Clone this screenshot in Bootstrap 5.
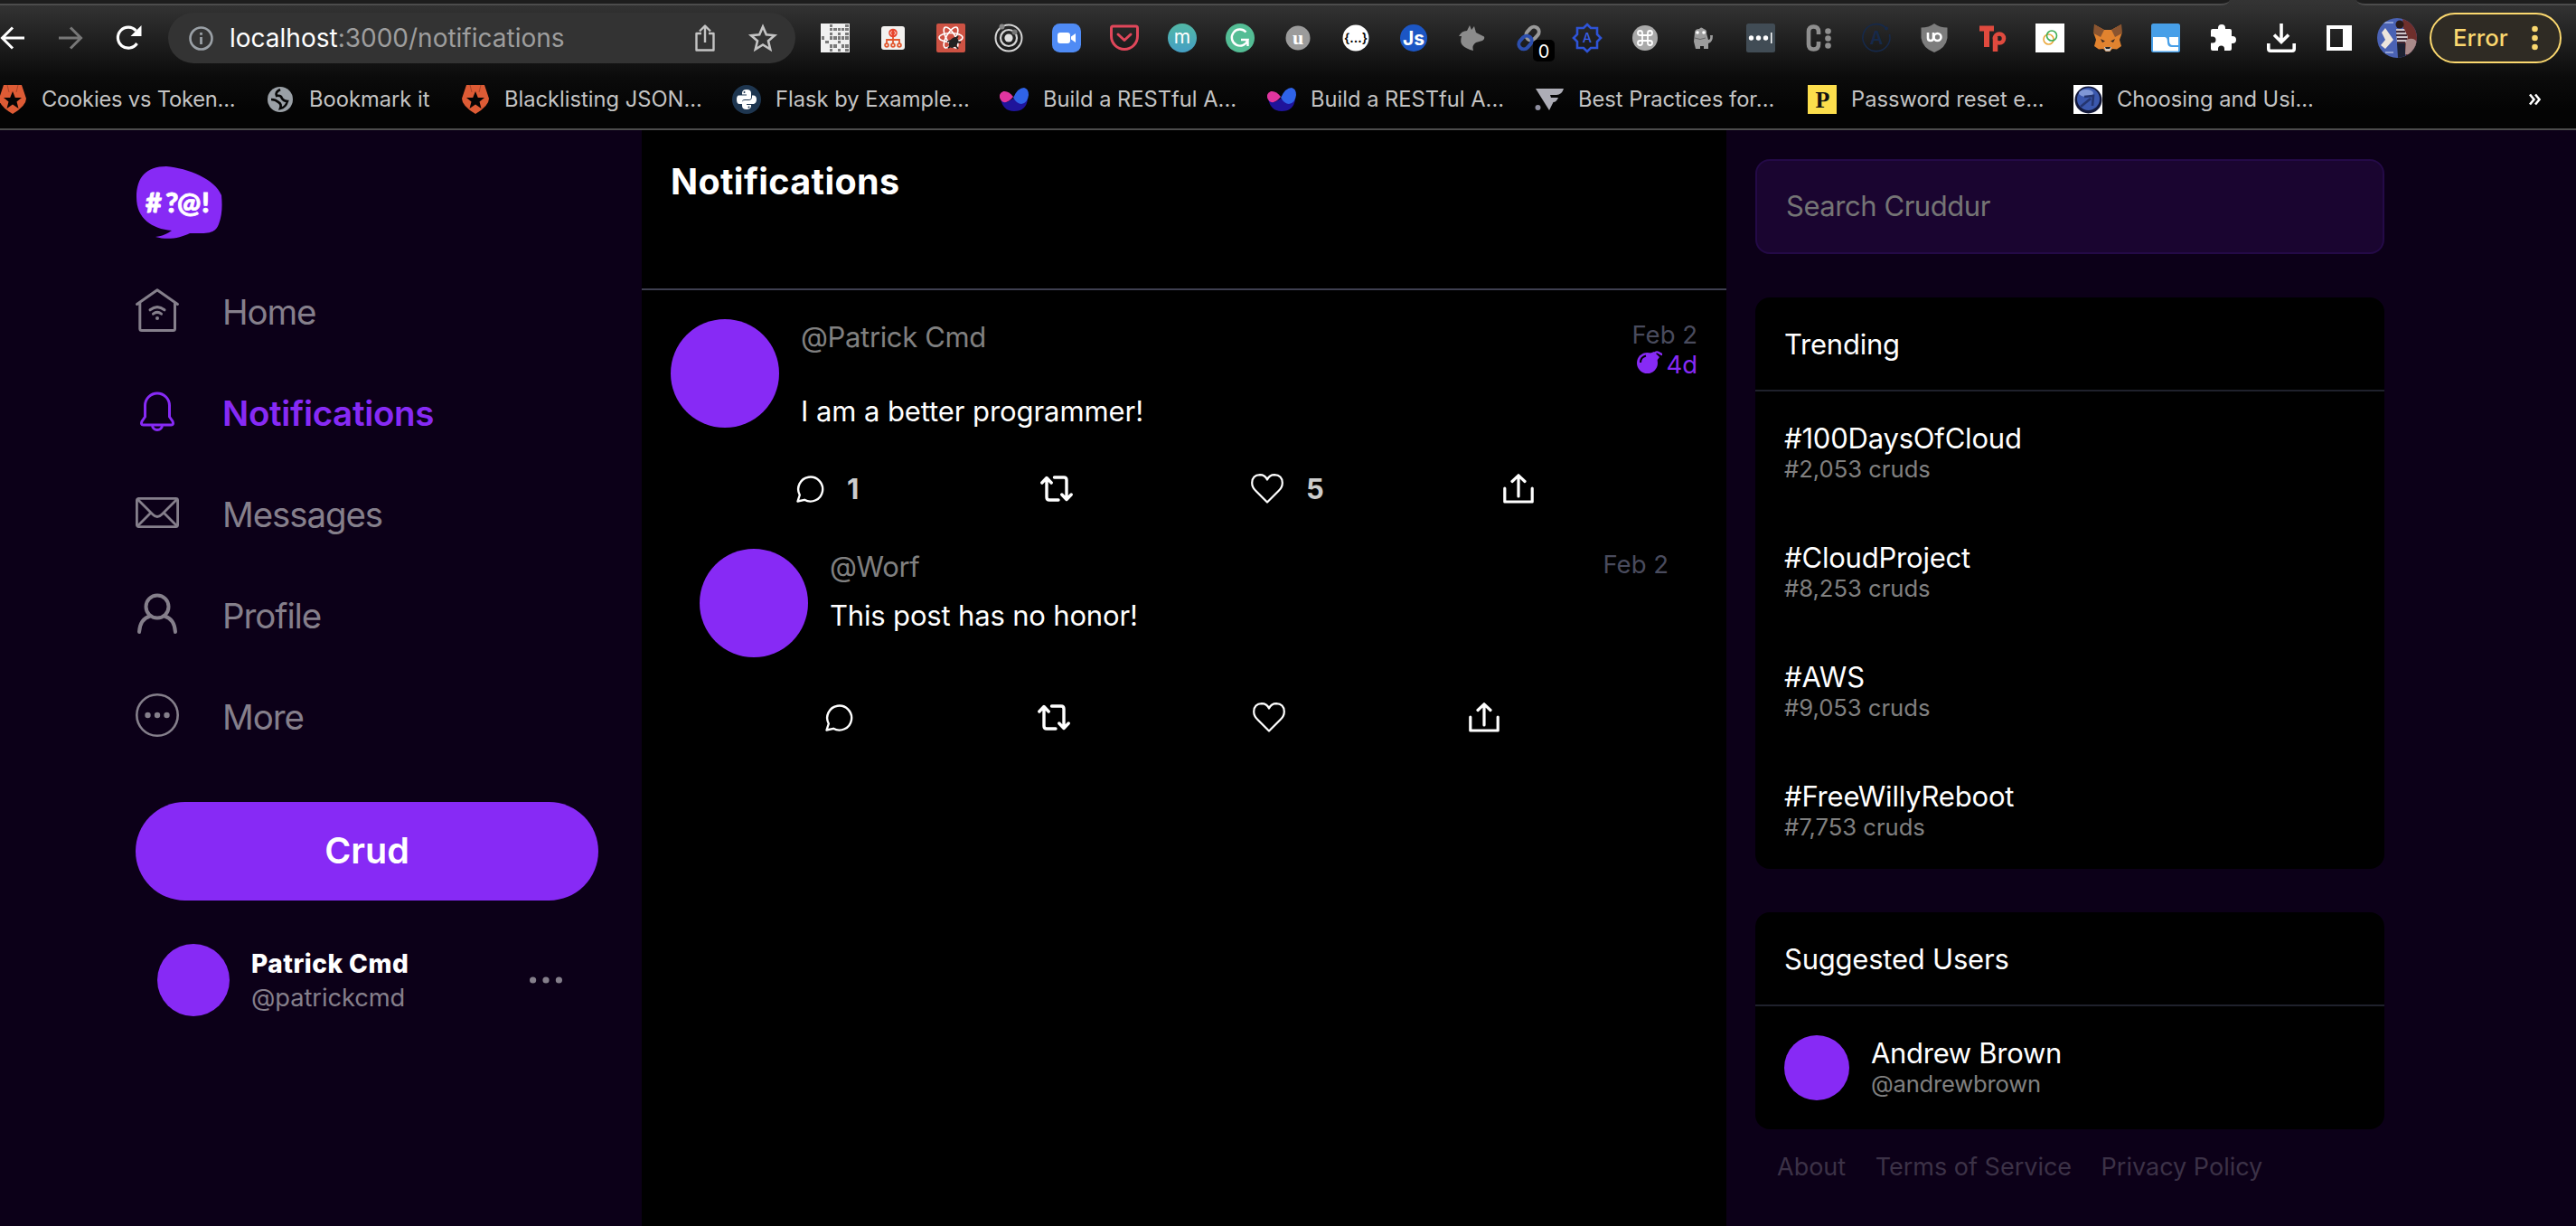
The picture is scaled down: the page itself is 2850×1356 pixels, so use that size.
<!DOCTYPE html>
<html lang="en">
<head>
<meta charset="utf-8">
<title>Notifications</title>
<link href="https://cdn.jsdelivr.net/npm/bootstrap@5.3.0/dist/css/bootstrap.min.css" rel="stylesheet">
<style>
:root{--violet:#872af5;--ink:#0c0018;--dim:#857f8b}
html,body{height:100%}
body{background:#000;color:#fff;font-family:Inter,"Liberation Sans",sans-serif;width:2850px;height:1356px;overflow:hidden}
a{text-decoration:none;color:inherit}
svg{display:block;flex:none;overflow:visible}

/* browser frame */
.chrome{height:144px;border-bottom:2px solid #4c4c4c;background:linear-gradient(#343434 0,#303030 12px,#0b0b0b 86px,#040404 120px)}
.tabstrip{height:6px}
.tabstrip div{background:#1d1d1d;border-bottom:2px solid #4c4c4c;height:6px}
.tab-l{width:2467px;border-bottom-right-radius:10px 6px}
.tab-r{width:243px;border-bottom-left-radius:10px 6px}
.toolbar{height:72px}
.history{width:186px}
.history svg:nth-child(2){margin-left:38px}
.history svg:nth-child(3){margin-left:37px}
.omni{width:694px;height:56px;border-radius:28px;background:#333;padding:0 21px 0 23px}
.url{font-size:28px;color:#9e9e9e;margin-left:18px;line-height:56px}
.url b{font-weight:400;color:#fff}
.star{margin-left:38px}
.face{margin-left:10px}
.exts{margin-left:12px}
.ext{width:64px;height:56px;display:flex;align-items:center;justify-content:center;position:relative}
.ext-count{position:absolute;left:36px;top:30px;width:24px;height:24px;border-radius:5px;background:#000;font-size:20px;line-height:26px;text-align:center}
.errpill{width:146px;height:56px;border:2px solid #fbd86f;border-radius:28px;background:#2f2b24;color:#fbd86f;font-size:25.7px;font-weight:500;padding:0 24px 0 24px;margin-left:14px}
.marks{display:grid;grid-template-columns:296px 216px 300px 296px 296px 296px 302px 294px 500px auto;margin-left:-2px;height:64px;align-items:center;font-size:23.7px;color:#c4c4c4}
.marks a{display:flex;align-items:center;gap:16px;white-space:nowrap;line-height:32px}
.marks a:first-child{letter-spacing:-.2px}

/* application */
.app{height:1212px}
.side{width:710px;background:var(--ink);padding:40px 48px 0 150px}
.side-link{height:112px;gap:48px;color:var(--dim);font-size:38.5px;letter-spacing:-1.1px}
.side-link span{padding-top:5px}
.side-link.current{color:var(--violet);font-weight:600;letter-spacing:-.33px}
.side-nav{margin-top:23px}
.crud-btn{height:109px;width:512px;margin-top:40px;border-radius:55px;background:var(--violet);color:#fff;font-size:39.5px;font-weight:600;border:0}
.crud-btn:hover{background:var(--violet);color:#fff}
.me{margin:48px 40px 0 24px}
.disc{background:var(--violet);border-radius:50%;flex:none}
.d80{width:80px;height:80px}.d120{width:120px;height:120px}.d72{width:72px;height:72px}
.me-name{font-size:28px;font-weight:800;letter-spacing:.5px;line-height:37px;padding-top:1px}
.me-handle{font-size:27.3px;color:var(--dim);line-height:37px;letter-spacing:-.08px}
.feed{width:1200px;background:#000}
.feed-head{height:177px;padding:33px 32px 0;border-bottom:2px solid #3e3f50}
.feed-head h1{font-size:39.5px;font-weight:750;letter-spacing:.35px;line-height:49px;margin:0}
.post,.reply{gap:24px}
.post{padding:32px 32px 0}
.reply{padding:46px 64px 0}
.who-row{height:40px}
.who{font-size:31px;color:#808080;line-height:40px;letter-spacing:-.35px}
.msg{font-size:31px;line-height:40px;letter-spacing:-.08px}
.post .msg{margin-top:42px}
.reply .msg{margin-top:14px;letter-spacing:-.17px}
.when{font-size:27.5px;line-height:33px;color:#494b5d;padding-top:1px}
.fuse{color:var(--violet);gap:3px}
.acts{display:grid;align-items:center;height:44px;margin-left:-5px}
.post .acts{grid-template-columns:270px 233px 279px auto;margin-top:42px}
.reply .acts{grid-template-columns:235px 238px 239px auto;margin-top:70px}
.acts b{font-size:31px;font-weight:700;color:#ccc;line-height:44px;padding-top:2px}
.with-count{gap:25px}
.rail{width:940px;background:var(--ink);padding:32px 212px 0 32px}
.search{height:105px;border:2px solid #240a47;border-radius:16px;background:#1a0530;padding:0 32px 2px;font-size:31px;letter-spacing:-.45px;color:#fff;margin-bottom:48px}
.search:focus{background:#1a0530;color:#fff}
.search::placeholder{color:#757575;opacity:1}
.panel{background:#000;border-radius:16px;border:0;margin-bottom:48px;color:#fff}
.panel-head{height:104px;border-bottom:2px solid #1f212c;padding:0 32px;font-size:31px;letter-spacing:-.22px;line-height:103px}
.topic{height:132px;padding:32px 32px 0}
.suggest{gap:24px;padding:32px}
.t1{font-size:31px;letter-spacing:-.2px;line-height:40px}
.suggest .t1{letter-spacing:-.3px}
.t2{font-size:25.6px;line-height:32px;color:#808080;margin-top:-2px}
.suggest .t2{letter-spacing:-.2px}
.legal{padding-left:24px;gap:32.5px;font-size:27px;color:#3c3247;line-height:34px;margin-top:-23px}
</style>
</head>
<body>
<svg class="d-none">
  <symbol id="i-reply" viewBox="0 0 31 31"><path d="M1.500 29.500L3.800 22.500A13.500 13.500 0 1 1 9 27.800Z" fill="none" stroke="#fff" stroke-width="2.400" stroke-linejoin="round"/></symbol>
  <symbol id="i-repost" viewBox="0 0 36 29"><path d="M1.800 8L7 2.500L12.200 8M7 3V24Q7 27 10 27H20M15.500 2H26Q29 2 29 5V26M23.800 21L29 26.500L34.200 21" fill="none" stroke="#fff" stroke-width="3.400" stroke-linecap="round" stroke-linejoin="round"/></symbol>
  <symbol id="i-heart" viewBox="0 0 36 33"><path d="M18 31.500L5 18.500Q1.200 15 1.200 10Q1.500 1.500 10 1.200Q15.500 1.200 18 6.500Q20.500 1.200 26 1.200Q34.500 1.500 34.800 10Q34.800 15 31 18.500Z" fill="none" stroke="#fff" stroke-width="2.200" stroke-linejoin="round"/></symbol>
  <symbol id="i-share" viewBox="0 0 34 33"><path d="M1.800 16V31H32.200V16M17 25V2M10 8.500L17 1.800L24 8.500" fill="none" stroke="#fff" stroke-width="3.200" stroke-linecap="round" stroke-linejoin="round"/></symbol>
  <symbol id="i-auth" viewBox="0 0 32 32"><path d="M6 0H26L31 15Q31 23 16 32Q1 23 1 15Z" fill="#dd5b35"/><path d="M16 7L18.800 14H26L20.500 18.500L22.500 26L16 21.500L9.500 26L11.500 18.500L6 14H13.200Z" fill="#050505"/><path d="M10 0L12 8M22 0L20 8" stroke="#a8452a" stroke-width="1"/></symbol>
  <symbol id="i-rest" viewBox="0 0 32 32"><path d="M1 14Q3 29 16 29T31 16L24 20L15 15L8 19Z" fill="#1f149b"/><path d="M15 13Q10 6 4 7Q-1 9 0 14Q2 20 7 19Q11 18 15 13Z" fill="#e0359f"/><path d="M15 14Q20 3 27 3Q32 4 32 11Q31 20 24 21Q19 21 15 14Z" fill="#2f63e8"/></symbol>
</svg>
<header class="chrome">
  <div class="tabstrip d-flex justify-content-between"><div class="tab-l"></div><div class="tab-r"></div></div>
  <div class="toolbar d-flex align-items-center">
    <div class="history d-flex align-items-center">
      <svg width="27" height="26" viewBox="0 0 27 26" fill="none" stroke="#fff" stroke-width="3"><path d="M27 13H3M14 1.500L2.500 13L14 24.500"/></svg>
      <svg width="27" height="26" viewBox="0 0 27 26" fill="none" stroke="#777" stroke-width="3"><path d="M0 13H24M13 1.500L24.500 13L13 24.500"/></svg>
      <svg width="28" height="28" viewBox="0 0 28 28"><path d="M22.500 20A11.500 11.500 0 1 1 21.500 6" fill="none" stroke="#fff" stroke-width="3.200"/><path d="M27.500 0V12H15.500Z" fill="#fff"/></svg>
    </div>
    <div class="omni d-flex align-items-center">
      <svg width="27" height="27" viewBox="0 0 27 27"><circle cx="13.500" cy="13.500" r="12" fill="none" stroke="#9aa0a6" stroke-width="2.600"/><path d="M13.500 12V20M13.500 7V9.800" stroke="#9aa0a6" stroke-width="2.800"/></svg>
      <span class="url"><b>localhost</b>:3000/notifications</span>
      <svg class="ms-auto" width="22" height="30" viewBox="0 0 22 30" fill="none" stroke="#c4c4c4" stroke-width="2.400"><path d="M7 10H1.500V28.500H20.500V10H15M11 20V2M5 7.500L11 1.500L17 7.500" stroke-linejoin="round"/></svg>
      <svg class="star" width="30" height="30" viewBox="0 0 30 30" fill="none" stroke="#c4c4c4" stroke-width="2.600"><path d="M15 2.500L18.800 11.300L28 12.200L21 18.300L23.200 27.500L15 22.500L6.800 27.500L9 18.300L2 12.200L11.200 11.300Z"/></svg>
    </div>
    <div class="exts d-flex">
      <div class="ext"><svg width="32" height="32" viewBox="0 0 32 32"><path d="M0 0H32V32H0Z" fill="#f0f0f0"/><path d="M10 1h3v3h-3zM27 1h4v3h-4zM1 14h3v4h-3zM5 19h4v3h-4zM10 5h3v3h-3zM14 5h4v3h-4zM19 5h3v3h-3zM23 5h3v3h-3zM27 5h4v3h-4zM10 10h3v3h-3zM19 10h3v3h-3zM27 10h4v3h-4zM10 14h3v4h-3zM14 14h4v4h-4zM19 14h3v4h-3zM23 14h3v4h-3zM27 14h4v4h-4zM19 19h3v3h-3zM10 23h3v4h-3zM14 23h4v4h-4zM23 23h3v4h-3zM27 23h4v4h-4zM10 28h3v3h-3zM19 28h3v3h-3zM27 28h4v3h-4z" fill="#7a7a7a"/></svg></div>
      <div class="ext"><svg width="26" height="26" viewBox="0 0 26 26"><rect width="26" height="26" rx="3" fill="#f3f1ef"/><g fill="none" stroke="#e2582f" stroke-width="1.800"><path d="M13 11V19M6 19V15H20V19"/><circle cx="6" cy="21" r="1.900"/><circle cx="13" cy="21" r="1.900"/><circle cx="20" cy="21" r="1.900"/></g><circle cx="13" cy="7.500" r="4.800" fill="#e8452c"/><path d="M11.500 5.500L10 7.500L11.500 9.500M14.500 5.500L16 7.500L14.500 9.500" stroke="#fff" fill="none"/></svg></div>
      <div class="ext"><svg width="32" height="32" viewBox="0 0 32 32"><rect width="32" height="32" rx="2" fill="#cd5243"/><g fill="none" stroke="#fff" stroke-width="1.600"><ellipse cx="16" cy="15.500" rx="13" ry="5"/><ellipse cx="16" cy="15.500" rx="13" ry="5" transform="rotate(60 16 15.500)"/><ellipse cx="16" cy="15.500" rx="13" ry="5" transform="rotate(120 16 15.500)"/></g><ellipse cx="19" cy="21" rx="4.500" ry="6.500" transform="rotate(35 19 21)" fill="#222"/><path d="M12 20L16 19M13 27L17 24M24 28L21 24M27 21L22 20M24 14L21 17" stroke="#222" stroke-width="1.800"/></svg></div>
      <div class="ext"><svg width="32" height="32" viewBox="0 0 32 32" fill="none" stroke="#d6d6d6"><circle cx="16" cy="16" r="14.500" stroke-width="2"/><circle cx="16" cy="16" r="9" stroke-width="2.200"/><circle cx="16" cy="16" r="4.600" fill="#e0e0e0" stroke="none"/><circle cx="8.500" cy="3.500" r="3" fill="#888" stroke="none"/><circle cx="22.500" cy="9.500" r="3" fill="#777" stroke="none"/></svg></div>
      <div class="ext"><svg width="32" height="32" viewBox="0 0 32 32"><rect width="32" height="32" rx="8.500" fill="#4f8bf5"/><rect x="6" y="10" width="14" height="12" rx="3" fill="#fff"/><path d="M21 14.500L26 11V21L21 17.500Z" fill="#fff"/></svg></div>
      <div class="ext"><svg width="32" height="30" viewBox="0 0 32 30" fill="none" stroke="#e0475a" stroke-width="3"><path d="M3.500 2H28.500Q30.500 2 30.500 4V13A14.500 14.500 0 0 1 1.500 13V4Q1.500 2 3.500 2Z"/><path d="M9 11L16 17.500L23 11" stroke-linecap="round" stroke-linejoin="round"/></svg></div>
      <div class="ext"><svg width="32" height="32" viewBox="0 0 32 32"><defs><linearGradient id="gm" x2="0" y2="1"><stop stop-color="#52b8a6"/><stop offset="1" stop-color="#459fc4"/></linearGradient></defs><circle cx="16" cy="16" r="16" fill="url(#gm)"/><text x="16" y="22" font-size="21" fill="#fff" text-anchor="middle">m</text></svg></div>
      <div class="ext"><svg width="32" height="32" viewBox="0 0 32 32"><circle cx="16" cy="16" r="16" fill="#54bd95"/><path d="M22.500 9.500A9 9 0 1 0 24.500 18H17M24.500 18V25" fill="none" stroke="#fff" stroke-width="2.400"/></svg></div>
      <div class="ext"><svg width="28" height="28" viewBox="0 0 28 28"><circle cx="14" cy="14" r="13.500" fill="#9b9b9b"/><text x="14" y="20.500" font-size="22" font-weight="700" font-family="Liberation Serif" fill="#fff" text-anchor="middle">u</text></svg></div>
      <div class="ext"><svg width="30" height="30" viewBox="0 0 30 30"><circle cx="15" cy="15" r="14.500" fill="#fff"/><text x="15" y="20" font-size="14" font-weight="600" fill="#000" text-anchor="middle">{...}</text></svg></div>
      <div class="ext"><svg width="30" height="30" viewBox="0 0 30 30"><circle cx="15" cy="15" r="15" fill="#1c56c4"/><text x="15" y="22.500" font-size="21" font-weight="700" fill="#fff" text-anchor="middle">Js</text></svg></div>
      <div class="ext"><svg width="30" height="28" viewBox="0 0 30 28"><path d="M1 12Q4 6 10 6L13 0L15 5L18 1L20 8L29 12.500Q30 15 27 17L20 19Q15 22 17 28Q9 26 5 22Q2 19 4 12Z" fill="#8c8c8c"/></svg></div>
      <div class="ext"><svg width="30" height="30" viewBox="0 0 30 30" fill="none" stroke-width="4"><rect x="13" y="2" width="11" height="16" rx="5.500" transform="rotate(42 18.500 10)" stroke="#9a9a9a"/><rect x="5" y="12" width="11" height="16" rx="5.500" transform="rotate(42 10.500 20)" stroke="#2c4fae"/></svg><span class="ext-count">0</span></div>
      <div class="ext"><svg width="32" height="32" viewBox="0 0 32 32"><path d="M16 1L20 5H27V12L31 16L27 20V27H20L16 31L12 27H5V20L1 16L5 12V5H12Z" fill="none" stroke="#2e53d6" stroke-width="2.600"/><text x="16" y="21" font-size="14.500" fill="#3a5fe6" text-anchor="middle" font-weight="500">A</text></svg></div>
      <div class="ext"><svg width="28" height="28" viewBox="0 0 28 28"><circle cx="14" cy="14" r="14" fill="#a9a9a9"/><path d="M11 11V8.500A2.500 2.500 0 1 0 8.500 11H19.500A2.500 2.500 0 1 0 17 8.500V19.500A2.500 2.500 0 1 0 19.500 17H8.500A2.500 2.500 0 1 0 11 19.500Z" fill="none" stroke="#fff" stroke-width="1.800"/></svg></div>
      <div class="ext"><svg width="22" height="24" viewBox="0 0 22 24"><path d="M2 6Q2 2 7 2Q9-1 12 2Q16 3 15 7L17 14Q20 14 19 9L22 9Q22 17 17 18V24H12V21H8V24H3L1 16Z" fill="#9d9d9d"/><circle cx="5" cy="6" r="1.800" fill="#fff"/><circle cx="12" cy="6" r="1.800" fill="#fff"/><path d="M2 12Q8 15 14 12" stroke="#666" fill="none"/></svg></div>
      <div class="ext"><svg width="32" height="32" viewBox="0 0 32 32"><rect width="32" height="32" rx="2.500" fill="#414c55"/><g fill="#fff"><circle cx="5.500" cy="16" r="2.700"/><circle cx="13.500" cy="16" r="2.700"/><circle cx="21.500" cy="16" r="2.700"/><path d="M27 10H28.500V22H27Z"/></g></svg></div>
      <div class="ext"><svg width="28" height="30" viewBox="0 0 28 30"><path d="M14 11V8Q14 2.500 8.500 2.500T3 8V22Q3 27.500 8.500 27.500T14 22V19" fill="none" stroke="#8f8f8f" stroke-width="4.600"/><g fill="#8f8f8f"><circle cx="24.500" cy="7.500" r="3.300"/><circle cx="24.500" cy="15.500" r="3.300"/><circle cx="24.500" cy="23.500" r="3.300"/></g></svg></div>
      <div class="ext"><svg width="32" height="32" viewBox="0 0 32 32"><path d="M26 4.500A15 15 0 1 0 30.500 12" fill="none" stroke="#16294a" stroke-width="1.600"/><circle cx="27" cy="5.500" r="2" fill="#16294a"/><text x="16" y="23" font-size="20" font-weight="600" fill="#16294a" text-anchor="middle">A</text></svg></div>
      <div class="ext"><svg width="30" height="32" viewBox="0 0 30 32"><path d="M15 0Q21 4.500 29.500 4.500V16Q28 27 15 32Q2 27 .5 16V4.500Q9 4.500 15 0Z" fill="#7d7d7d"/><path d="M8 10V16Q8 19 11 19T14 16V10" fill="none" stroke="#fff" stroke-width="2.600"/><circle cx="18.500" cy="15" r="4" fill="none" stroke="#fff" stroke-width="2.600"/></svg></div>
      <div class="ext"><svg width="30" height="32" viewBox="0 0 30 32"><path d="M1 5.500H17M9 5.500V26" stroke="#e04a3e" stroke-width="6" fill="none"/><path d="M18.500 31V15" stroke="#e04a3e" stroke-width="5.500"/><circle cx="23" cy="16.500" r="5" fill="none" stroke="#e04a3e" stroke-width="4.600"/></svg></div>
      <div class="ext"><svg width="32" height="32" viewBox="0 0 32 32"><path d="M0 0H32V32H0Z" fill="#fff"/><circle cx="14.500" cy="17.500" r="5.500" fill="none" stroke="#eaa93f" stroke-width="1.600"/><circle cx="18" cy="13.500" r="5.500" fill="none" stroke="#3fae55" stroke-width="1.600"/></svg></div>
      <div class="ext"><svg width="32" height="30" viewBox="0 0 32 30"><path d="M1 0L12 6H20L31 0L31.500 10L29 17L31 24L26 27.500L21 27L18 30H14L11 27L6 27.500L1 24L3 17L.5 10Z" fill="#e2832f"/><path d="M1 0L12 6L8 14L.5 10ZM31 0L20 6L24 14L31.500 10Z" fill="#8a5430"/><path d="M8 16L13 18.500L10 20ZM24 16L19 18.500L22 20Z" fill="#3d2a20"/><path d="M12 25H20L18.500 29.500H13.500Z" fill="#ccc"/><path d="M13 25H19L18 27H14Z" fill="#222"/></svg></div>
      <div class="ext"><svg width="32" height="32" viewBox="0 0 32 32"><rect width="32" height="32" rx="2.500" fill="#479fe8"/><path d="M2 15H15Q18 15 18 21Q18 26 23 26H30V30.500H2ZM20 15H30V24H24Q20 24 20 19Z" fill="#fff"/></svg></div>
      <div class="ext"><svg width="30" height="30" viewBox="0 0 30 30"><path d="M1 7Q1 5 3 5H9V4A4 4 0 0 1 17 4V5H22Q24 5 24 7V13H25A4 4 0 0 1 25 21H24V27Q24 29 22 29H16V27A3.500 3.500 0 0 0 9 27V29H3Q1 29 1 27V20.500H3A3.500 3.500 0 0 0 3 13.500H1Z" fill="#fff"/></svg></div>
      <div class="ext"><svg width="32" height="32" viewBox="0 0 32 32" fill="none" stroke="#fff" stroke-width="3.600"><path d="M16 0V20M8 12.500L16 20.500L24 12.500M1.800 22V28Q1.800 30.200 4 30.200H28Q30.200 30.200 30.200 28V22"/></svg></div>
      <div class="ext"><svg width="28" height="28" viewBox="0 0 28 28"><path d="M0 0H28V28H0ZM4 4V24H18V4Z" fill="#fff" fill-rule="evenodd"/></svg></div>
    </div>
    <svg class="face" width="44" height="44" viewBox="0 0 44 44"><defs><clipPath id="pf"><circle cx="22" cy="22" r="22"/></clipPath></defs><g clip-path="url(#pf)"><path d="M0 0H44V44H0Z" fill="#4a62b4"/><path d="M28 0H44V44H32Z" fill="#6f2f2c"/><path d="M32 24Q44 20 44 30L38 40H31Z" fill="#a98a8a"/><path d="M5 16L9 11L18 24L9 34L4 30L9 24Z" fill="#ece4dc"/><path d="M7 5H18M9 38H18" stroke="#a9b6e0" stroke-width="1.500"/><circle cx="25" cy="7" r="4.500" fill="#2a1a18"/><path d="M21 12H30L34 21L31 28H22Z" fill="#cfc6cb"/><path d="M21 15H31M21 19H33M22 23H33M22 27H31" stroke="#432a35" stroke-width="2"/><path d="M22 28H31V44H23Z" fill="#1d2233"/></g></svg>
    <div class="errpill d-flex align-items-center justify-content-between"><span>Error</span><svg width="7" height="28" viewBox="0 0 7 28" fill="#fbd86f"><circle cx="3.500" cy="4" r="3.300"/><circle cx="3.500" cy="14" r="3.300"/><circle cx="3.500" cy="24" r="3.300"/></svg></div>
  </div>
  <nav class="marks">
    <a href="#"><svg width="32" height="32"><use href="#i-auth"/></svg>Cookies vs Token...</a>
    <a href="#"><svg width="32" height="28" viewBox="0 0 32 28"><circle cx="16" cy="14" r="14" fill="#9aa0a6"/><path d="M16 3Q10 6 12 10Q17 9 18 13Q20 16 24 16Q22 23 16 24Q18 19 14 17Q11 14 6 14" fill="none" stroke="#060606" stroke-width="2.600"/></svg>Bookmark it</a>
    <a href="#"><svg width="32" height="32"><use href="#i-auth"/></svg>Blacklisting JSON...</a>
    <a href="#"><svg width="32" height="32" viewBox="0 0 32 32"><circle cx="16" cy="16" r="16" fill="#1e3650"/><path d="M11 9Q11 5 16 5T21 9V14Q21 16 18 16H14Q11 16 11 19V21H8Q5 21 5 16T8 11.500H16V10.500H11Z" fill="#fff"/><path d="M21 23Q21 27 16 27T11 23V19Q11 17 14 17H18Q22 17 22 13V11.500H24Q27 12 27 16T24 21H16V22H21Z" fill="#fff"/><circle cx="13.500" cy="8" r="1" fill="#1e3650"/><circle cx="18.500" cy="24.500" r="1" fill="#1e3650"/></svg>Flask by Example...</a>
    <a href="#"><svg width="32" height="32"><use href="#i-rest"/></svg>Build a RESTful A...</a>
    <a href="#"><svg width="32" height="32"><use href="#i-rest"/></svg>Build a RESTful A...</a>
    <a href="#"><svg width="32" height="32" viewBox="0 0 32 32"><path d="M1 4H32Q30 11 24 11H17L18 14H26Q24 19 20.500 19L16 28Z" fill="#adadb6"/><circle cx="3.500" cy="25" r="3" fill="#8f8fa0"/></svg>Best Practices for...</a>
    <a href="#"><svg width="32" height="32" viewBox="0 0 32 32"><path d="M0 0H32V32H0Z" fill="#fcde4c"/><text x="16.500" y="25" font-size="26" font-weight="700" font-family="Liberation Serif" text-anchor="middle" fill="#111">P</text></svg>Password reset e...</a>
    <a href="#"><svg width="32" height="32" viewBox="0 0 32 32"><path d="M0 0H32V32H0Z" fill="#fff"/><circle cx="16.500" cy="16.500" r="15" fill="#12183a"/><circle cx="16.500" cy="15.500" r="12.500" fill="#3b58ad"/><ellipse cx="14" cy="9" rx="8" ry="4" fill="#7f97d6"/><path d="M8 24L19 15M12 13L22 12L21 23" stroke="#24356f" stroke-width="2.600" fill="none"/></svg>Choosing and Usi...</a>
    <a href="#"><svg class="ms-1" width="13" height="12" viewBox="0 0 13 12" fill="none" stroke="#fff" stroke-width="2.600"><path d="M1 .5L5.500 6L1 11.500M7 .5L11.500 6L7 11.500"/></svg></a>
  </nav>
</header>

<div class="app d-flex">
  <aside class="side">
    <svg width="96" height="80" viewBox="0 0 96 80"><path d="M1 34C1 12 12 0 34 0C58 2 88 14 95 32C96 42 96 54 92 64C89 72 83 74 73 74H60C50 79 36 82 22 78C30 77 36 74 40 71C18 69 1 58 1 34Z" fill="#872af5"/><text x="11 33 46 73" y="51" font-family="Lato" font-weight="900" font-size="31" fill="#fff" stroke="#fff" stroke-width=".8">#?@!</text></svg>
    <nav class="side-nav">
      <a class="side-link d-flex align-items-center" href="#"><svg width="48" height="48" viewBox="0 0 48 48" fill="none" stroke="currentColor" stroke-width="3" stroke-linecap="round" stroke-linejoin="round"><path d="M1.500 17.500L24 1.800L46.500 17.500M4.800 16V44.500Q4.800 46.500 6.800 46.500H41.500Q43.500 46.500 43.500 44.500V16M16 23.800Q24 17.500 32 23.800M19.500 28.200Q24 24.500 28.500 28.200"/><circle cx="24" cy="33" r="2" fill="currentColor" stroke="none"/></svg><span>Home</span></a>
      <a class="side-link current d-flex align-items-center" href="#"><svg width="48" height="48" viewBox="0 0 48 48" fill="none" stroke="currentColor" stroke-width="3" stroke-linejoin="round"><path d="M10.500 30V17.500A13.500 13.500 0 0 1 37.500 17.500V30L41 35Q42.500 39 39.500 39H8.500Q5.500 39 7 35ZM18.500 39A5.500 5.500 0 0 0 29.500 39"/></svg><span>Notifications</span></a>
      <a class="side-link d-flex align-items-center" href="#"><svg width="48" height="48" viewBox="0 0 48 48" fill="none" stroke="currentColor" stroke-width="2.800" stroke-linejoin="round"><rect x="1.400" y="8.400" width="45.200" height="31.200" rx="2"/><path d="M2 9L19 26Q24 31 29 26L46 9M2 39L16.500 24.500M46 39L31.500 24.500"/></svg><span>Messages</span></a>
      <a class="side-link d-flex align-items-center" href="#"><svg width="48" height="48" viewBox="0 0 48 48" fill="none" stroke="currentColor" stroke-width="4" stroke-linecap="round"><circle cx="24" cy="16" r="12.500"/><path d="M4 44Q5 29.500 16 26.500M44 44Q43 29.500 32 26.500"/></svg><span>Profile</span></a>
      <a class="side-link d-flex align-items-center" href="#"><svg width="48" height="48" viewBox="0 0 48 48"><circle cx="24" cy="24" r="22.700" fill="none" stroke="currentColor" stroke-width="2.600"/><g fill="currentColor"><circle cx="13.500" cy="24" r="3.200"/><circle cx="24" cy="24" r="3.200"/><circle cx="34.500" cy="24" r="3.200"/></g></svg><span>More</span></a>
    </nav>
    <button class="btn crud-btn d-block">Crud</button>
    <div class="me d-flex align-items-center">
      <div class="disc d80"></div>
      <div class="ms-4"><div class="me-name">Patrick Cmd</div><div class="me-handle">@patrickcmd</div></div>
      <svg class="ms-auto" width="36" height="8" viewBox="0 0 36 8" fill="#857f8b"><circle cx="3.600" cy="4" r="3.600"/><circle cx="18" cy="4" r="3.600"/><circle cx="32.400" cy="4" r="3.600"/></svg>
    </div>
  </aside>

  <main class="feed">
    <div class="feed-head"><h1>Notifications</h1></div>
    <article class="post d-flex">
      <div class="disc d120"></div>
      <div class="flex-grow-1">
        <div class="who-row d-flex justify-content-between"><span class="who">@Patrick Cmd</span>
          <div class="when text-end">Feb 2<div class="fuse d-flex justify-content-end"><svg width="29" height="26" viewBox="0 0 29 26"><circle cx="11.500" cy="14.500" r="11.500" fill="#872af5"/><path d="M14 4L19 2L25 8L22 12Z" fill="#872af5"/><path d="M19 5Q21 1 24 3T28 5" stroke="#872af5" stroke-width="2.400" fill="none"/><path d="M4 14Q4 8 10 6.500" stroke="#000" stroke-width="2" fill="none"/></svg>4d</div></div>
        </div>
        <div class="msg">I am a better programmer!</div>
        <div class="acts">
          <div class="with-count d-flex align-items-center"><svg width="31" height="31"><use href="#i-reply"/></svg><b>1</b></div>
          <svg width="36" height="29"><use href="#i-repost"/></svg>
          <div class="with-count d-flex align-items-center"><svg width="36" height="33"><use href="#i-heart"/></svg><b>5</b></div>
          <svg width="34" height="33"><use href="#i-share"/></svg>
        </div>
      </div>
    </article>
    <article class="reply d-flex">
      <div class="disc d120"></div>
      <div class="flex-grow-1">
        <div class="who-row d-flex justify-content-between"><span class="who">@Worf</span><div class="when">Feb 2</div></div>
        <div class="msg">This post has no honor!</div>
        <div class="acts">
          <svg width="31" height="31"><use href="#i-reply"/></svg>
          <svg width="36" height="29"><use href="#i-repost"/></svg>
          <svg width="36" height="33"><use href="#i-heart"/></svg>
          <svg width="34" height="33"><use href="#i-share"/></svg>
        </div>
      </div>
    </article>
  </main>

  <aside class="rail">
    <input class="form-control search" type="text" placeholder="Search Cruddur">
    <section class="card panel">
      <div class="panel-head">Trending</div>
      <div class="topic"><div class="t1">#100DaysOfCloud</div><div class="t2">#2,053 cruds</div></div>
      <div class="topic"><div class="t1">#CloudProject</div><div class="t2">#8,253 cruds</div></div>
      <div class="topic"><div class="t1">#AWS</div><div class="t2">#9,053 cruds</div></div>
      <div class="topic"><div class="t1">#FreeWillyReboot</div><div class="t2">#7,753 cruds</div></div>
    </section>
    <section class="card panel">
      <div class="panel-head">Suggested Users</div>
      <div class="suggest d-flex">
        <div class="disc d72"></div>
        <div><div class="t1">Andrew Brown</div><div class="t2">@andrewbrown</div></div>
      </div>
    </section>
    <div class="legal d-flex"><a href="#">About</a><a href="#">Terms of Service</a><a href="#">Privacy Policy</a></div>
  </aside>
</div>
<script src="https://cdn.jsdelivr.net/npm/bootstrap@5.3.0/dist/js/bootstrap.bundle.min.js"></script>
</body>
</html>
